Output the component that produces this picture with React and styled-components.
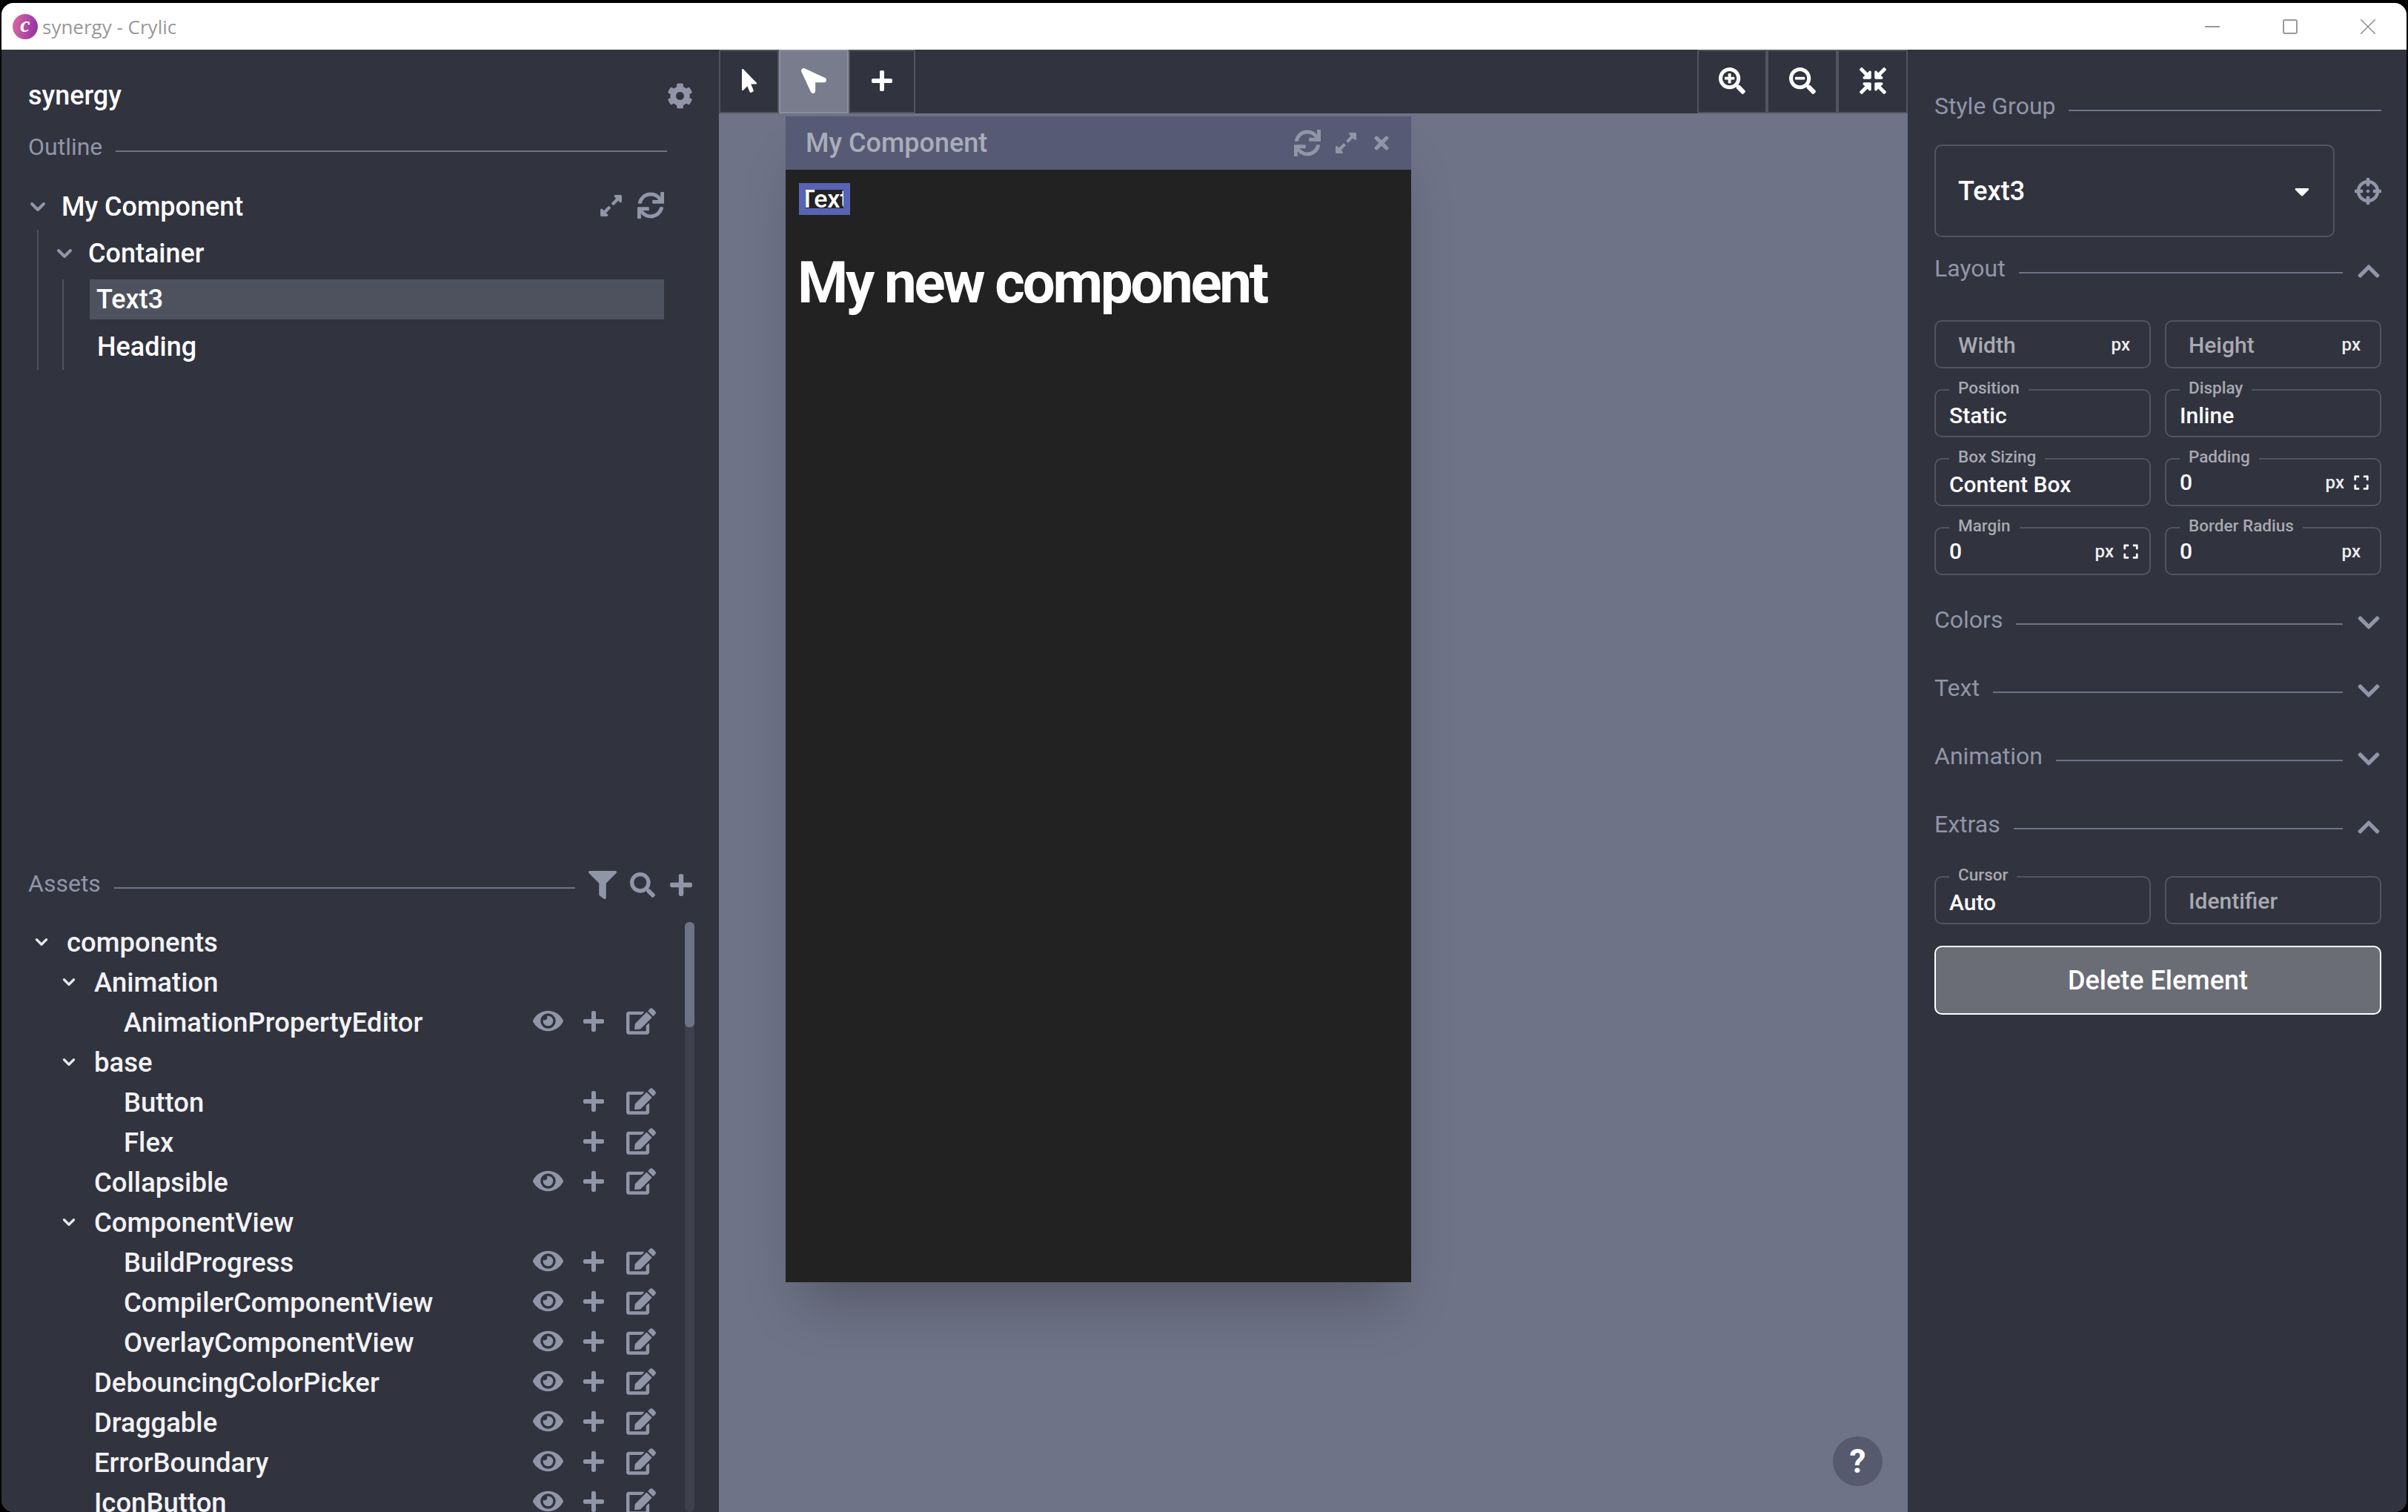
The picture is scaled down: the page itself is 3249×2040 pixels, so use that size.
import React from 'react';
import styled, { createGlobalStyle } from 'styled-components';
import {
  FaCog, FaSync, FaExpandAlt, FaEye, FaPlus, FaEdit, FaFilter, FaSearch, FaMousePointer,
  FaLocationArrow, FaSearchPlus, FaSearchMinus, FaCompressArrowsAlt, FaTimes, FaCrosshairs,
  FaChevronDown, FaChevronUp, FaExpand, FaCaretDown,
} from 'react-icons/fa';
import { FiChevronDown } from 'react-icons/fi';

const panel = '#31333f';
const muted = '#9195a8';
const line = '#6e7387';
const edge = '#52555f';

const Global = createGlobalStyle`
  html, body { margin: 0; padding: 0; background: #000; }
  * { box-sizing: border-box; }
`;

const Frame = styled.div`
  width: 3249px;
  height: 2040px;
  padding: 4px 2px 0 2px;
  background: #000;
  overflow: hidden;
  font-family: Roboto, sans-serif;
`;

const Window = styled.div`
  height: 100%;
  display: flex;
  flex-direction: column;
  border-radius: 16px;
  overflow: hidden;
  background: ${panel};
`;

const TitleBar = styled.div`
  height: 63px;
  flex: none;
  display: flex;
  align-items: center;
  padding-left: 15px;
  background: #fff;
`;

const AppLogo = styled.div`
  width: 34px;
  height: 34px;
  border-radius: 50%;
  background: linear-gradient(100deg, #dc6a9f, #8b2fa6);
  color: #fff;
  font: italic 700 30px/28px "Liberation Serif", serif;
  text-align: center;
`;

const TitleText = styled.div`
  margin-left: 6px;
  font: 400 26px "Open Sans", sans-serif;
  color: #999;
`;

const WindowControls = styled.div`
  margin-left: auto;
  margin-right: 42px;
  display: flex;
  gap: 85px;
  svg { display: block; }
`;

const Main = styled.div`
  flex: 1;
  min-height: 0;
  display: flex;
`;

const LeftPanel = styled.div`
  width: 968px;
  flex: none;
  display: flex;
  flex-direction: column;
  background: ${panel};
`;

const OutlinePane = styled.div`
  height: 1105px;
  flex: none;
  padding: 40px 35px 0 36px;
`;

const ProjectRow = styled.div`
  display: flex;
  justify-content: space-between;
  align-items: center;
  height: 44px;
  font-size: 36px;
  font-weight: 500;
  color: #fff;
  svg { font-size: 35px; color: ${muted}; }
`;

const HeaderRow = styled.div`
  display: flex;
  align-items: center;
  height: 40px;
  gap: 18px;
`;

const HeaderLabel = styled.div`
  font-size: 32px;
  font-weight: 400;
  color: ${muted};
  white-space: nowrap;
`;

const HeaderLine = styled.div`
  flex: 1;
  height: 2px;
  margin-top: 12px;
  background: ${line};
`;

const OutlineHeader = styled(HeaderRow)`
  margin-top: 27px;
  margin-right: 35px;
`;

const OutlineTree = styled.div`
  margin-top: 29px;
  width: 858px;
`;

const OutlineRow = styled.div`
  display: flex;
  align-items: center;
  height: 63px;
  padding-left: ${p => p.$indent}px;
  font-size: 36px;
  font-weight: 500;
  color: #fff;
  white-space: nowrap;
  svg { flex: none; }
`;

const OutlineChevron = styled(FiChevronDown)`
  width: 32px;
  height: 32px;
  margin-left: -3px;
  margin-right: 16px;
  color: ${muted};
  stroke-width: 3;
`;

const AssetChevron = styled(FiChevronDown)`
  width: 26px;
  height: 26px;
  color: #e8e8ec;
  stroke-width: 3;
`;

const NestedGuide = styled.div`
  margin-left: ${p => p.$left}px;
  border-left: 2px solid #4e5260;
`;

const SelectedRow = styled.div`
  display: flex;
  align-items: center;
  height: 54px;
  margin: 4px 0 5px 35px;
  padding-left: 9px;
  background: #4e525e;
  font-size: 36px;
  font-weight: 500;
  color: #fff;
`;

const RowIcons = styled.div`
  margin-left: auto;
  margin-bottom: 3px;
  display: flex;
  align-items: center;
  gap: 19px;
  color: ${muted};
`;

const AssetsPane = styled.div`
  flex: 1;
  min-height: 0;
  display: flex;
  flex-direction: column;
  padding-left: 36px;
`;

const AssetsHeader = styled(HeaderRow)`
  padding-right: 34px;
  svg { flex: none; margin-top: 4px; color: ${muted}; }
`;

const AssetsBody = styled.div`
  flex: 1;
  min-height: 0;
  display: flex;
  margin-top: 32px;
  padding-right: 33px;
  overflow: hidden;
`;

const AssetsList = styled.div`
  flex: 1;
  min-width: 0;
`;

const AssetRow = styled.div`
  display: flex;
  align-items: center;
  height: 54px;
  padding-left: ${p => p.$indent}px;
  padding-right: 25px;
  font-size: 36.5px;
  font-weight: 500;
  color: #f2f2f4;
  white-space: nowrap;
`;

const ChevronSlot = styled.div`
  width: 47px;
  flex: none;
  display: flex;
`;

const AssetActions = styled.div`
  margin-left: auto;
  margin-bottom: 3px;
  display: flex;
  align-items: center;
  color: ${muted};
  svg { display: block; }
`;

const ActionSlot = styled.div`
  width: ${p => p.$width}px;
  display: flex;
  justify-content: center;
`;

const ScrollTrack = styled.div`
  width: 13px;
  flex: none;
  border-radius: 6px;
  background: #3e414d;
`;

const ScrollThumb = styled.div`
  height: 142px;
  border-radius: 6px;
  background: ${line};
`;

const Center = styled.div`
  flex: 1;
  min-width: 0;
  position: relative;
  display: flex;
  flex-direction: column;
  background: ${line};
`;

const Toolbar = styled.div`
  height: 86px;
  flex: none;
  display: flex;
  justify-content: space-between;
  background: ${panel};
`;

const ToolGroup = styled.div`
  display: flex;
`;

const ToolButton = styled.div`
  width: ${p => p.$width}px;
  display: flex;
  align-items: center;
  justify-content: center;
  padding-bottom: 3px;
  border: 2px solid ${p => (p.$active ? '#8a8e9d' : edge)};
  background: ${p => (p.$active ? '#787c8d' : panel)};
  color: #fff;
`;

const ArrowTool = styled(FaLocationArrow)`
  transform: rotate(-90deg);
`;

const Canvas = styled.div`
  flex: 1;
  min-height: 0;
  padding: 4px 0 0 90px;
`;

const Preview = styled.div`
  width: 844px;
  box-shadow: 0 50px 70px -20px rgba(0, 0, 0, 0.22);
`;

const PreviewHeader = styled.div`
  height: 72px;
  display: flex;
  align-items: center;
  padding: 0 26px 0 27px;
  background: #565a74;
  font-size: 36px;
  font-weight: 500;
  color: #a9adba;
`;

const PreviewActions = styled.div`
  margin-left: auto;
  display: flex;
  align-items: center;
  gap: 18px;
  color: ${muted};
  svg { display: block; }
`;

const PreviewBody = styled.div`
  height: 1501px;
  padding: 18px 18px 0;
  background: #222;
  color: #fff;
`;

const SelectedText = styled.div`
  width: 69px;
  height: 43px;
  border: 9px solid #5863b3;
  overflow: hidden;
  font: 500 34px/25px Roboto, sans-serif;
  white-space: nowrap;
  text-indent: -8px;
`;

const BigHeading = styled.div`
  margin: 46px 0 0 -2px;
  font-size: 78px;
  line-height: 92px;
  font-weight: 700;
  letter-spacing: -3.3px;
`;

const HelpButton = styled.div`
  position: absolute;
  right: 34px;
  bottom: 35px;
  width: 67px;
  height: 67px;
  border-radius: 50%;
  display: flex;
  align-items: center;
  justify-content: center;
  background: #565a6e;
  color: #fff;
  font-size: 44px;
  font-weight: 700;
`;

const RightPanel = styled.div`
  width: 673px;
  flex: none;
  padding: 56px 34px 0 36px;
  background: ${panel};
`;

const SectionHeader = styled(HeaderRow)`
  margin-top: ${p => p.$top}px;
  svg { flex: none; margin-top: 8px; color: ${muted}; }
`;

const SelectRow = styled.div`
  margin-top: 32px;
  display: flex;
  align-items: center;
  justify-content: space-between;
  svg { display: block; }
`;

const SelectBox = styled.div`
  width: 540px;
  height: 125px;
  display: flex;
  align-items: center;
  justify-content: space-between;
  padding: 0 26px 0 30px;
  border: 2px solid ${edge};
  border-radius: 10px;
  font-size: 36px;
  font-weight: 500;
  color: #fff;
`;

const FieldGrid = styled.div`
  margin-top: ${p => p.$top}px;
  display: grid;
  grid-template-columns: 292px 292px;
  column-gap: 19px;
  row-gap: 28px;
`;

const Field = styled.div`
  position: relative;
  height: 65px;
  display: flex;
  align-items: center;
  padding: 0 ${p => (p.$wide ? 14 : 26)}px 0 ${p => (p.$placeholder ? 30 : 18)}px;
  border: 2px solid ${edge};
  border-radius: 10px;
  background: ${panel};
`;

const FieldLabel = styled.div`
  position: absolute;
  left: 18px;
  top: -18px;
  padding: 0 12px;
  background: ${panel};
  font-size: 22.5px;
  font-weight: 500;
  line-height: 28px;
  color: #a8a9b0;
`;

const FieldValue = styled.div`
  padding-top: ${p => (p.$text ? 6 : 0)}px;
  font-size: 30px;
  font-weight: 500;
  color: #fff;
`;

const Placeholder = styled.div`
  padding-top: 2px;
  font-size: 30px;
  font-weight: 500;
  color: #a8a9b0;
`;

const Unit = styled.div`
  margin-left: auto;
  display: flex;
  align-items: center;
  gap: 12px;
  font-size: 24px;
  font-weight: 500;
  color: #eee;
  svg { color: #fff; display: block; }
`;

const DeleteButton = styled.div`
  margin-top: 29px;
  height: 93px;
  display: flex;
  align-items: center;
  justify-content: center;
  border: 2px solid #fff;
  border-radius: 10px;
  background: #6b6d76;
  font-size: 36px;
  font-weight: 500;
  color: #fff;
`;

const assets = [
  { name: 'components', indent: 5, open: true },
  { name: 'Animation', indent: 42, open: true },
  { name: 'AnimationPropertyEditor', indent: 129, eye: true, acts: true },
  { name: 'base', indent: 42, open: true },
  { name: 'Button', indent: 129, acts: true },
  { name: 'Flex', indent: 129, acts: true },
  { name: 'Collapsible', indent: 89, eye: true, acts: true },
  { name: 'ComponentView', indent: 42, open: true },
  { name: 'BuildProgress', indent: 129, eye: true, acts: true },
  { name: 'CompilerComponentView', indent: 129, eye: true, acts: true },
  { name: 'OverlayComponentView', indent: 129, eye: true, acts: true },
  { name: 'DebouncingColorPicker', indent: 89, eye: true, acts: true },
  { name: 'Draggable', indent: 89, eye: true, acts: true },
  { name: 'ErrorBoundary', indent: 89, eye: true, acts: true },
  { name: 'IconButton', indent: 89, eye: true, acts: true },
];

const Section = ({ title, top, open }) => (
  <SectionHeader $top={top}>
    <HeaderLabel>{title}</HeaderLabel>
    <HeaderLine />
    {open ? <FaChevronUp size={34} /> : <FaChevronDown size={34} />}
  </SectionHeader>
);

const SelectField = ({ label, value }) => (
  <Field>
    <FieldLabel>{label}</FieldLabel>
    <FieldValue $text>{value}</FieldValue>
  </Field>
);

const NumberField = ({ label, expand }) => (
  <Field $wide={expand}>
    <FieldLabel>{label}</FieldLabel>
    <FieldValue>0</FieldValue>
    <Unit>px{expand && <FaExpand size={22} />}</Unit>
  </Field>
);

const SizeField = ({ label, unit }) => (
  <Field $placeholder>
    <Placeholder>{label}</Placeholder>
    {unit && <Unit>px</Unit>}
  </Field>
);

export default function App() {
  return (
    <Frame>
      <Global />
      <Window>
        <TitleBar>
          <AppLogo>c</AppLogo>
          <TitleText>synergy - Crylic</TitleText>
          <WindowControls>
            <svg width="20" height="20" viewBox="0 0 20 20"><path d="M0 10h20" stroke="#999" strokeWidth="2" /></svg>
            <svg width="20" height="20" viewBox="0 0 20 20"><rect x="1" y="1" width="18" height="18" rx="2" fill="none" stroke="#999" strokeWidth="2" /></svg>
            <svg width="20" height="20" viewBox="0 0 20 20"><path d="M0 0l20 20M20 0L0 20" stroke="#999" strokeWidth="1.6" /></svg>
          </WindowControls>
        </TitleBar>
        <Main>
          <LeftPanel>
            <OutlinePane>
              <ProjectRow>
                synergy
                <FaCog />
              </ProjectRow>
              <OutlineHeader>
                <HeaderLabel>Outline</HeaderLabel>
                <HeaderLine />
              </OutlineHeader>
              <OutlineTree>
                <OutlineRow $indent={0}>
                  <OutlineChevron />
                  My Component
                  <RowIcons>
                    <FaExpandAlt size={33} />
                    <FaSync size={36} />
                  </RowIcons>
                </OutlineRow>
                <NestedGuide $left={12}>
                  <OutlineRow $indent={22}>
                    <OutlineChevron />
                    Container
                  </OutlineRow>
                  <NestedGuide $left={32}>
                    <SelectedRow>Text3</SelectedRow>
                    <OutlineRow $indent={45}>Heading</OutlineRow>
                  </NestedGuide>
                </NestedGuide>
              </OutlineTree>
            </OutlinePane>
            <AssetsPane>
              <AssetsHeader>
                <HeaderLabel>Assets</HeaderLabel>
                <HeaderLine />
                <FaFilter size={38} />
                <FaSearch size={34} />
                <FaPlus size={34} />
              </AssetsHeader>
              <AssetsBody>
                <AssetsList>
                  {assets.map(a => (
                    <AssetRow key={a.name} $indent={a.indent}>
                      {a.open && (
                        <ChevronSlot>
                          <AssetChevron />
                        </ChevronSlot>
                      )}
                      {a.name}
                      {a.acts && (
                        <AssetActions>
                          <ActionSlot $width={64}>{a.eye && <FaEye size={41} />}</ActionSlot>
                          <ActionSlot $width={60}><FaPlus size={32} /></ActionSlot>
                          <ActionSlot $width={68}><FaEdit size={40} /></ActionSlot>
                        </AssetActions>
                      )}
                    </AssetRow>
                  ))}
                </AssetsList>
                <ScrollTrack>
                  <ScrollThumb />
                </ScrollTrack>
              </AssetsBody>
            </AssetsPane>
          </LeftPanel>
          <Center>
            <Toolbar>
              <ToolGroup>
                <ToolButton $width={81}><FaMousePointer size={32} /></ToolButton>
                <ToolButton $width={94} $active><ArrowTool size={34} /></ToolButton>
                <ToolButton $width={90}><FaPlus size={32} /></ToolButton>
              </ToolGroup>
              <ToolGroup>
                <ToolButton $width={94}><FaSearchPlus size={36} /></ToolButton>
                <ToolButton $width={95}><FaSearchMinus size={36} /></ToolButton>
                <ToolButton $width={95}><FaCompressArrowsAlt size={36} /></ToolButton>
              </ToolGroup>
            </Toolbar>
            <Canvas>
              <Preview>
                <PreviewHeader>
                  My Component
                  <PreviewActions>
                    <FaSync size={36} />
                    <FaExpandAlt size={32} />
                    <FaTimes size={28} />
                  </PreviewActions>
                </PreviewHeader>
                <PreviewBody>
                  <SelectedText>Text</SelectedText>
                  <BigHeading>My new component</BigHeading>
                </PreviewBody>
              </Preview>
            </Canvas>
            <HelpButton>?</HelpButton>
          </Center>
          <RightPanel>
            <HeaderRow>
              <HeaderLabel>Style Group</HeaderLabel>
              <HeaderLine />
            </HeaderRow>
            <SelectRow>
              <SelectBox>
                Text3
                <FaCaretDown size={32} />
              </SelectBox>
              <FaCrosshairs size={36} color={muted} />
            </SelectRow>
            <Section title="Layout" top={22} open />
            <FieldGrid $top={50}>
              <SizeField label="Width" unit />
              <SizeField label="Height" unit />
              <SelectField label="Position" value="Static" />
              <SelectField label="Display" value="Inline" />
              <SelectField label="Box Sizing" value="Content Box" />
              <NumberField label="Padding" expand />
              <NumberField label="Margin" expand />
              <NumberField label="Border Radius" />
            </FieldGrid>
            <Section title="Colors" top={40} />
            <Section title="Text" top={52} />
            <Section title="Animation" top={52} />
            <Section title="Extras" top={52} open />
            <FieldGrid $top={50}>
              <SelectField label="Cursor" value="Auto" />
              <SizeField label="Identifier" />
            </FieldGrid>
            <DeleteButton>Delete Element</DeleteButton>
          </RightPanel>
        </Main>
      </Window>
    </Frame>
  );
}
